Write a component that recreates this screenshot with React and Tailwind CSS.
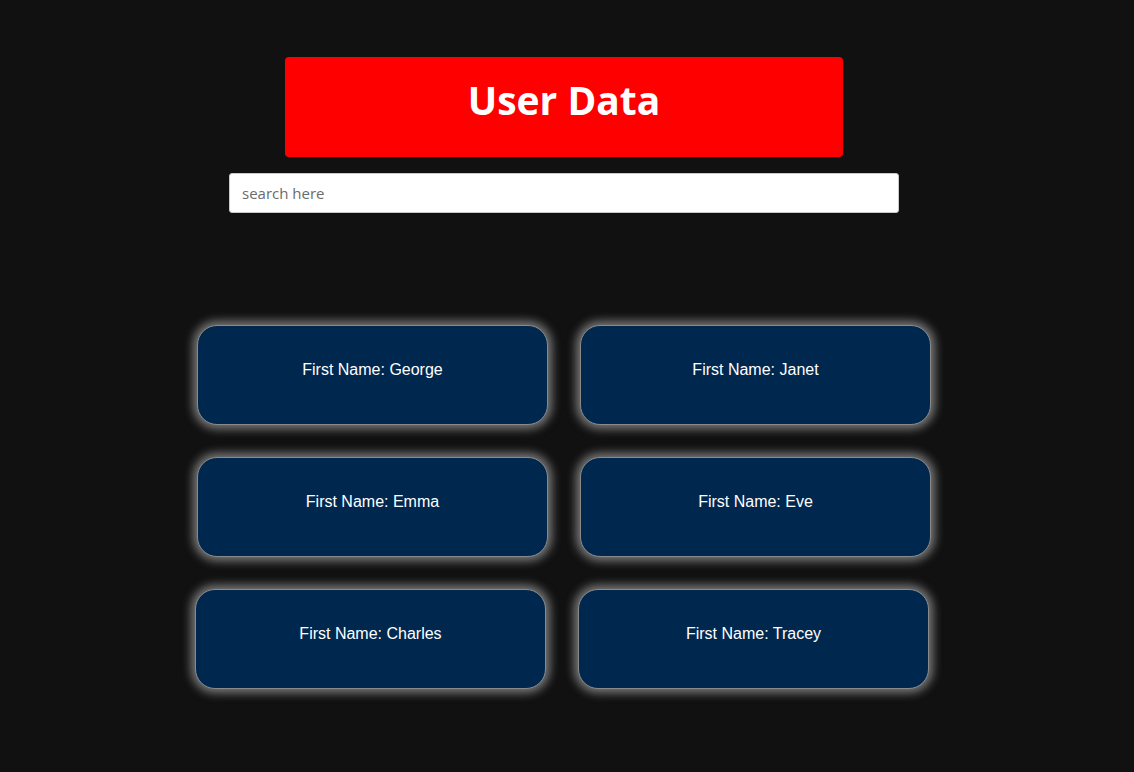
const USERS = ["George", "Janet", "Emma", "Eve", "Charles", "Tracey"];

export default function App() {
  return (
    <div className="min-h-[772px] bg-[#111111] pr-[6px] pt-[57px]">
      <div className="flex flex-col items-center">
        <div className="flex h-[100px] w-[558px] items-center justify-center rounded-[4px] bg-[#ff0000] pb-[14px]">
          <h1 className="text-[39px] font-bold text-white [font-family:'Open_Sans','Noto_Sans',sans-serif]">
            User Data
          </h1>
        </div>
        <input
          type="text"
          placeholder="search here"
          className="mt-4 h-10 w-[670px] rounded-[3px] border border-[#c8c8c8] bg-white px-3 text-[15px] text-[#333] placeholder:text-[#6b6b6b] outline-none [font-family:'Open_Sans','Noto_Sans',sans-serif]"
        />
      </div>

      <div className="mx-auto mt-[112px] grid w-[734px] grid-cols-2 gap-8">
        {USERS.map((name, i) => (
          <div
            key={name}
            className={`flex h-[100px] items-center justify-center rounded-[20px] border border-[#8a8a8a] bg-[#00284f] pb-[10px] text-base text-white shadow-[0_0_10px_4px_rgba(225,225,225,0.5)] [font-family:'Liberation_Sans',Arial,sans-serif] ${
              i >= 4 ? "-translate-x-[2px]" : ""
            }`}
          >
            First Name: {name}
          </div>
        ))}
      </div>
    </div>
  );
}
